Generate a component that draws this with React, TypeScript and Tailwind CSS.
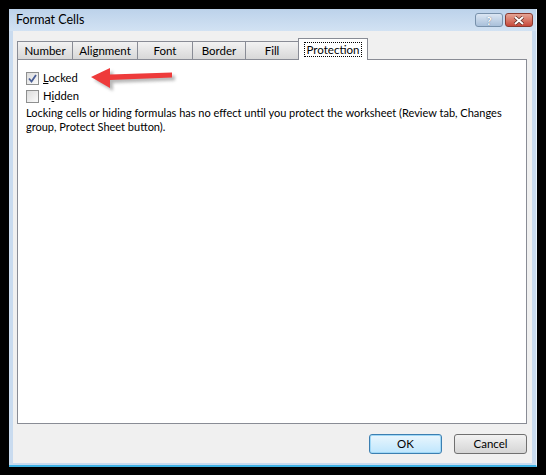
const font = { fontFamily: 'Lato, "Noto Sans", sans-serif' };

function Tab({ label, w }: { label: string; w: string }) {
  return (
    <div
      className={`${w} mt-[3px] flex h-[18px] items-center justify-center border border-b-0 border-r-0 border-[#898c95] bg-gradient-to-b from-[#f2f2f2] to-[#d8d8d8] text-[11.5px] text-black`}
    >
      {label}
    </div>
  );
}

function Checkbox({ checked }: { checked?: boolean }) {
  return (
    <span className="flex size-[13px] items-center justify-center border border-[#8e8f8f] bg-gradient-to-br from-[#dcdcdc] to-[#fbfbfb]">
      {checked && (
        <svg width="9" height="9" viewBox="0 0 9 9">
          <path d="M1 4.5 L3.5 7.5 L8 1" fill="none" stroke="#4a5e96" strokeWidth="1.8" />
        </svg>
      )}
    </span>
  );
}

export default function App() {
  return (
    <div className="h-[475px] w-[546px] bg-black pb-[8px] pl-[9px] pr-[9px] pt-[9px]" style={font}>
      <div className="flex h-full flex-col border-b-2 border-r border-b-[#3fb2e4] border-r-[#e8f2fb] bg-[#c9dbef]">
        {/* title bar */}
        <div className="flex h-[22px] items-center bg-gradient-to-b from-[#bcd2ea] to-[#d2e2f3] pl-[7px] pr-[3px]">
          <span className="text-[12.5px] text-black">Format Cells</span>
          <div className="ml-auto flex gap-[2px]">
            <span className="flex h-[14px] w-[28px] items-center justify-center rounded-[3px] border border-[#7891ab] bg-gradient-to-b from-[#dbe6f3] to-[#a9c0da] text-[11px] font-bold leading-none text-white [text-shadow:0_0_1px_#44556b]">
              ?
            </span>
            <span className="flex h-[14px] w-[28px] items-center justify-center rounded-[3px] border border-[#8a3a30] bg-gradient-to-b from-[#e5a596] to-[#c6473a]">
              <svg width="12" height="9" viewBox="0 0 12 9">
                <path d="M2 1 L10 8 M10 1 L2 8" stroke="#5a2a22" strokeWidth="3.4" />
                <path d="M2 1 L10 8 M10 1 L2 8" stroke="#fff" strokeWidth="2" />
              </svg>
            </span>
          </div>
        </div>
        {/* body */}
        <div className="mx-[4px] mb-[2px] flex flex-1 flex-col bg-[#f0f0f0] pl-[4px] pr-[5px] pt-[7px]">
          <div className="flex h-[21px] items-start">
            <Tab label="Number" w="w-[55px]" />
            <Tab label="Alignment" w="w-[65px]" />
            <Tab label="Font" w="w-[55px]" />
            <Tab label="Border" w="w-[53px]" />
            <Tab label="Fill" w="w-[53px]" />
            <div className="relative z-10 -mb-px flex h-[22px] w-[70px] items-center justify-center border border-b-0 border-[#898c95] bg-white text-[11.5px] text-black">
              <span className="border border-dotted border-black px-[2px] leading-[13px]">Protection</span>
            </div>
          </div>
          <div className="relative h-[365px] border border-[#898c95] bg-white pl-[8px] pt-[9px] text-[11.25px] text-black">
            <div className="flex h-[18px] items-center gap-[4px]">
              <Checkbox checked />
              <span>
                <span className="underline">L</span>ocked
              </span>
            </div>
            <div className="flex h-[18px] items-center gap-[4px]">
              <Checkbox />
              <span>
                H<span className="underline">i</span>dden
              </span>
            </div>
            <p className="mt-[1px] whitespace-nowrap text-[11px] leading-[14px]">
              Locking cells or hiding formulas has no effect until you protect the worksheet (Review tab, Changes
              <br />
              group, Protect Sheet button).
            </p>
            {/* annotation arrow */}
            <svg className="absolute left-[71px] top-[4px]" width="100" height="34" viewBox="0 0 100 34">
              <defs>
                <filter id="sh" x="-20%" y="-40%" width="140%" height="200%">
                  <feGaussianBlur stdDeviation="1.6" />
                </filter>
              </defs>
              <g transform="translate(3,3)" filter="url(#sh)" fill="#9a9a9a" opacity="0.7">
                <path d="M2 13 L21 4 L21 10.5 L83 8.5 L83 13.5 L21 16 L21 24 Z" />
              </g>
              <path d="M2 13 L21 4 L21 10.5 L83 8.5 L83 13.5 L21 16 L21 24 Z" fill="#ee3b3b" />
            </svg>
          </div>
          <div className="mt-[10px] flex justify-end gap-[12px]">
            <button className="h-[20px] w-[73px] rounded-[3px] border border-[#3c7fb1] bg-gradient-to-b from-[#eaf6fd] to-[#bee6fd] text-[11.5px] text-black shadow-[inset_0_0_0_1px_#9fd8f7]">
              OK
            </button>
            <button className="h-[20px] w-[73px] rounded-[3px] border border-[#707070] bg-gradient-to-b from-[#f2f2f2] to-[#d5d5d5] text-[11.5px] text-black">
              Cancel
            </button>
          </div>
        </div>
      </div>
    </div>
  );
}
